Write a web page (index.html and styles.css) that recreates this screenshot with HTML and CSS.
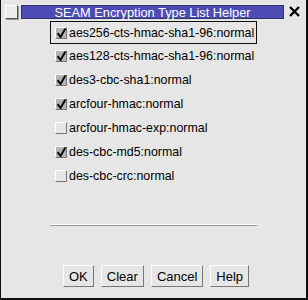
FILE: index.html
```html
<!DOCTYPE html>
<html lang="en">
<head>
  <meta charset="UTF-8">
  <title>SEAM Encryption Type List Helper</title>
  <link rel="stylesheet" href="styles.css">
</head>
<body>

  <div class="window">
    <!-- Title bar -->
    <div class="titlebar">
      <span class="menu-box"></span>
      <div class="title">SEAM Encryption Type List Helper</div>
      <span class="close">
        <svg width="11" height="11" viewBox="0 0 11 11">
          <path d="M1 1 L10 10 M10 1 L1 10" stroke="#000" stroke-width="2.4" fill="none"/>
        </svg>
      </span>
    </div>

    <div class="content">
      <ul class="types">
        <li class="type focused"><span class="check on"></span>aes256-cts-hmac-sha1-96:normal</li>
        <li class="type"><span class="check on"></span>aes128-cts-hmac-sha1-96:normal</li>
        <li class="type"><span class="check on"></span>des3-cbc-sha1:normal</li>
        <li class="type"><span class="check on"></span>arcfour-hmac:normal</li>
        <li class="type"><span class="check"></span>arcfour-hmac-exp:normal</li>
        <li class="type"><span class="check on"></span>des-cbc-md5:normal</li>
        <li class="type"><span class="check"></span>des-cbc-crc:normal</li>
      </ul>

      <div class="separator"></div>

      <div class="buttons">
        <button>OK</button>
        <button>Clear</button>
        <button>Cancel</button>
        <button>Help</button>
      </div>
    </div>
  </div>

</body>
</html>
```

FILE: styles.css
```css
* {
  box-sizing: border-box;
}

body {
  margin: 0;
  font-family: 'Liberation Sans', Arial, sans-serif;
  font-size: 12.4px;
  color: #000;
  background: #e6e6e6;
}

.window {
  width: 308px;
  height: 300px;
  background: #e6e6e6;
  border-left: 1px solid #111;
  border-right: 2px solid #111;
  border-bottom: 2px solid #111;
  display: flex;
  flex-direction: column;
}

.titlebar {
  display: flex;
  align-items: center;
  height: 20px;
  padding: 3px 4px 0 4px;
}

.menu-box {
  width: 13px;
  height: 14px;
  background: #ececec;
  border-top: 1px solid #fff;
  border-left: 1px solid #fff;
  border-right: 1px solid #555;
  border-bottom: 1px solid #555;
  box-shadow: 1px 1px 0 #999;
}

.title {
  flex: 1;
  margin-left: 3px;
  height: 14px;
  line-height: 13px;
  background: #4c4cb4;
  border: 1px solid #30306a;
  color: #fff;
  font-size: 12.8px;
  text-align: center;
}

.close {
  width: 16px;
  display: flex;
  justify-content: center;
  margin-left: 2px;
}

.content {
  flex: 1;
  display: flex;
  flex-direction: column;
  padding: 1px 49px 0 49px;
}

.types {
  list-style: none;
  margin: 0;
  padding: 0;
}

.type {
  display: flex;
  align-items: center;
  height: 24px;
  padding-left: 4px;
  border: 1px solid transparent;
}

.type.focused {
  border-color: #111;
  height: 23px;
}

.check {
  width: 12px;
  height: 12px;
  margin-right: 2px;
  background: #e6e6e6;
  border-top: 1px solid #fff;
  border-left: 1px solid #fff;
  border-right: 1px solid #777;
  border-bottom: 1px solid #777;
  position: relative;
}

.check.on {
  background: #b4b4b4;
}

.check.on::after {
  content: '';
  position: absolute;
  left: 1px;
  top: 0;
  width: 9px;
  height: 10px;
  background: url("data:image/svg+xml,%3Csvg xmlns='http://www.w3.org/2000/svg' width='9' height='10' viewBox='0 0 9 10'%3E%3Cpath d='M0.5 5 L3.5 9 L8.5 0.5' stroke='%23000' stroke-width='2' fill='none'/%3E%3C/svg%3E") no-repeat;
}

.separator {
  margin-top: 36px;
  height: 2px;
  border-top: 1px solid #fff;
  border-bottom: 1px solid #999;
}

.buttons {
  display: flex;
  gap: 7px;
  margin-top: 39px;
  padding-left: 13px;
}

button {
  font-family: 'Liberation Sans', Arial, sans-serif;
  font-size: 13px;
  height: 22px;
  padding: 0 5px;
  background: #e6e6e6;
  color: #000;
  border-top: 1px solid #fff;
  border-left: 1px solid #fff;
  border-right: 1px solid #777;
  border-bottom: 1px solid #777;
  border-radius: 0;
}
```
